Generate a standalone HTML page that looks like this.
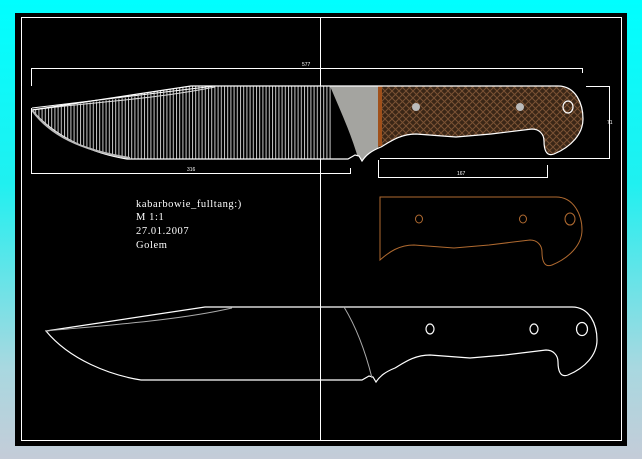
<!DOCTYPE html>
<html><head><style>
html,body{margin:0;padding:0;}
body{width:642px;height:459px;background:linear-gradient(#00ffff 0%,#20f0f0 40%,#a8d8e0 80%,#c4ccd8 100%);position:relative;overflow:hidden;font-family:"Liberation Serif",serif;}
svg{position:absolute;left:0;top:0;}
</style></head><body>
<svg width="642" height="459" viewBox="0 0 642 459">
<defs>
<path id="knife" d="M46,331 L205,307 L572,307 C590,307 597,325 597,340 C597,355 585,368 568,375 C560,378 558,370 558,362 C558,355 553,350 546,350 L505,355 L470,358 L430,355 C415,355 405,362 395,368 C385,372 380,376 376,382 L373,377 L369,376 L362,380 L141,380 C110,375 70,360 46,331 Z"/>
<clipPath id="kc"><use href="#knife" transform="translate(-14,-221)"/></clipPath>
<pattern id="vh" width="3.2" height="10" patternUnits="userSpaceOnUse"><rect width="3.2" height="10" fill="#000"/><rect width="1" height="10" fill="#c8c8c8"/></pattern>
<pattern id="xh" width="7" height="7" patternUnits="userSpaceOnUse"><rect width="7" height="7" fill="#3a2616"/><path d="M0,0L7,7M7,0L0,7" stroke="#7a5234" stroke-width="1"/></pattern>
</defs>
<rect x="15" y="13" width="612" height="433" fill="#000"/>
<rect x="21.5" y="17.5" width="600" height="423" fill="none" stroke="#fff" stroke-width="1"/>
<line x1="320.5" y1="17" x2="320.5" y2="441" stroke="#fff" stroke-width="1"/>
<g clip-path="url(#kc)">
<rect x="20" y="80" width="312" height="90" fill="url(#vh)"/>
<path d="M330,86 C340,110 352,135 360,165 L378,165 L378,86 Z" fill="#a4a4a0"/>
<rect x="378" y="80" width="220" height="90" fill="url(#xh)"/>
<rect x="378" y="86" width="4" height="60" fill="#a0501a"/>
<path d="M32,108 L215,86 L32,110Z" fill="#000"/>
</g>
<path d="M32,108 L215,86" stroke="#fff" stroke-width="1" fill="none"/>
<path d="M32,110 C90,102 150,100 215,87" stroke="#ddd" stroke-width="1" fill="none"/>
<use href="#knife" transform="translate(-14,-221)" fill="none" stroke="#fff" stroke-width="1.2"/>
<path d="M32,110 C50,135 80,150 130,158" stroke="#bbb" stroke-width="2" fill="none"/>
<circle cx="416" cy="107" r="4" fill="#bbb"/><circle cx="520" cy="107" r="4" fill="#bbb"/>
<ellipse cx="568" cy="107" rx="5" ry="6" fill="none" stroke="#fff" stroke-width="1.2"/>
<g stroke="#fff" stroke-width="1" fill="none">
<path d="M31.5,86 V68.5 H582.5 V73"/>
<path d="M31.5,108 V173.5 H350.5 V168"/>
<path d="M378.5,160 V177.5 H547.5 V165"/>
<path d="M586,86.5 H609.5 V158.5 H380"/>
</g>
<g fill="#fff" font-size="5" font-family="Liberation Sans,sans-serif">
<text x="302" y="66">577</text><text x="187" y="171">316</text><text x="457" y="175">167</text><text x="607" y="124">71</text>
</g>
<g transform="translate(-16,-110)" fill="none" stroke="#b06a30" stroke-width="1">
<path d="M396,307 L572,307 C590,307 598,325 598,340 C598,355 585,368 568,375 C560,378 558,370 558,362 C558,355 553,350 546,350 L505,355 L470,358 L430,355 C415,355 405,362 396,370 Z"/>
</g>
<g fill="none" stroke="#b06a30" stroke-width="1">
<ellipse cx="419" cy="219" rx="3.5" ry="4"/><ellipse cx="523" cy="219" rx="3.5" ry="4"/><ellipse cx="570" cy="219" rx="5" ry="6"/>
</g>
<g fill="#fff" font-size="10.5" letter-spacing="0.6">
<text x="136" y="207">kabarbowie_fulltang:)</text>
<text x="136" y="220">M 1:1</text>
<text x="136" y="234">27.01.2007</text>
<text x="136" y="248">Golem</text>
</g>
<use href="#knife" fill="none" stroke="#fff" stroke-width="1.2"/>
<path d="M46,331 C110,325 180,320 232,308" stroke="#aaa" fill="none" stroke-width="1"/>
<path d="M344,307 C355,325 365,350 372,378" stroke="#aaa" fill="none" stroke-width="1"/>
<g fill="none" stroke="#fff" stroke-width="1.2">
<ellipse cx="430" cy="329" rx="4" ry="5"/><ellipse cx="534" cy="329" rx="4" ry="5"/><ellipse cx="582" cy="329" rx="5.5" ry="6.5"/>
</g>
</svg>
</body></html>
